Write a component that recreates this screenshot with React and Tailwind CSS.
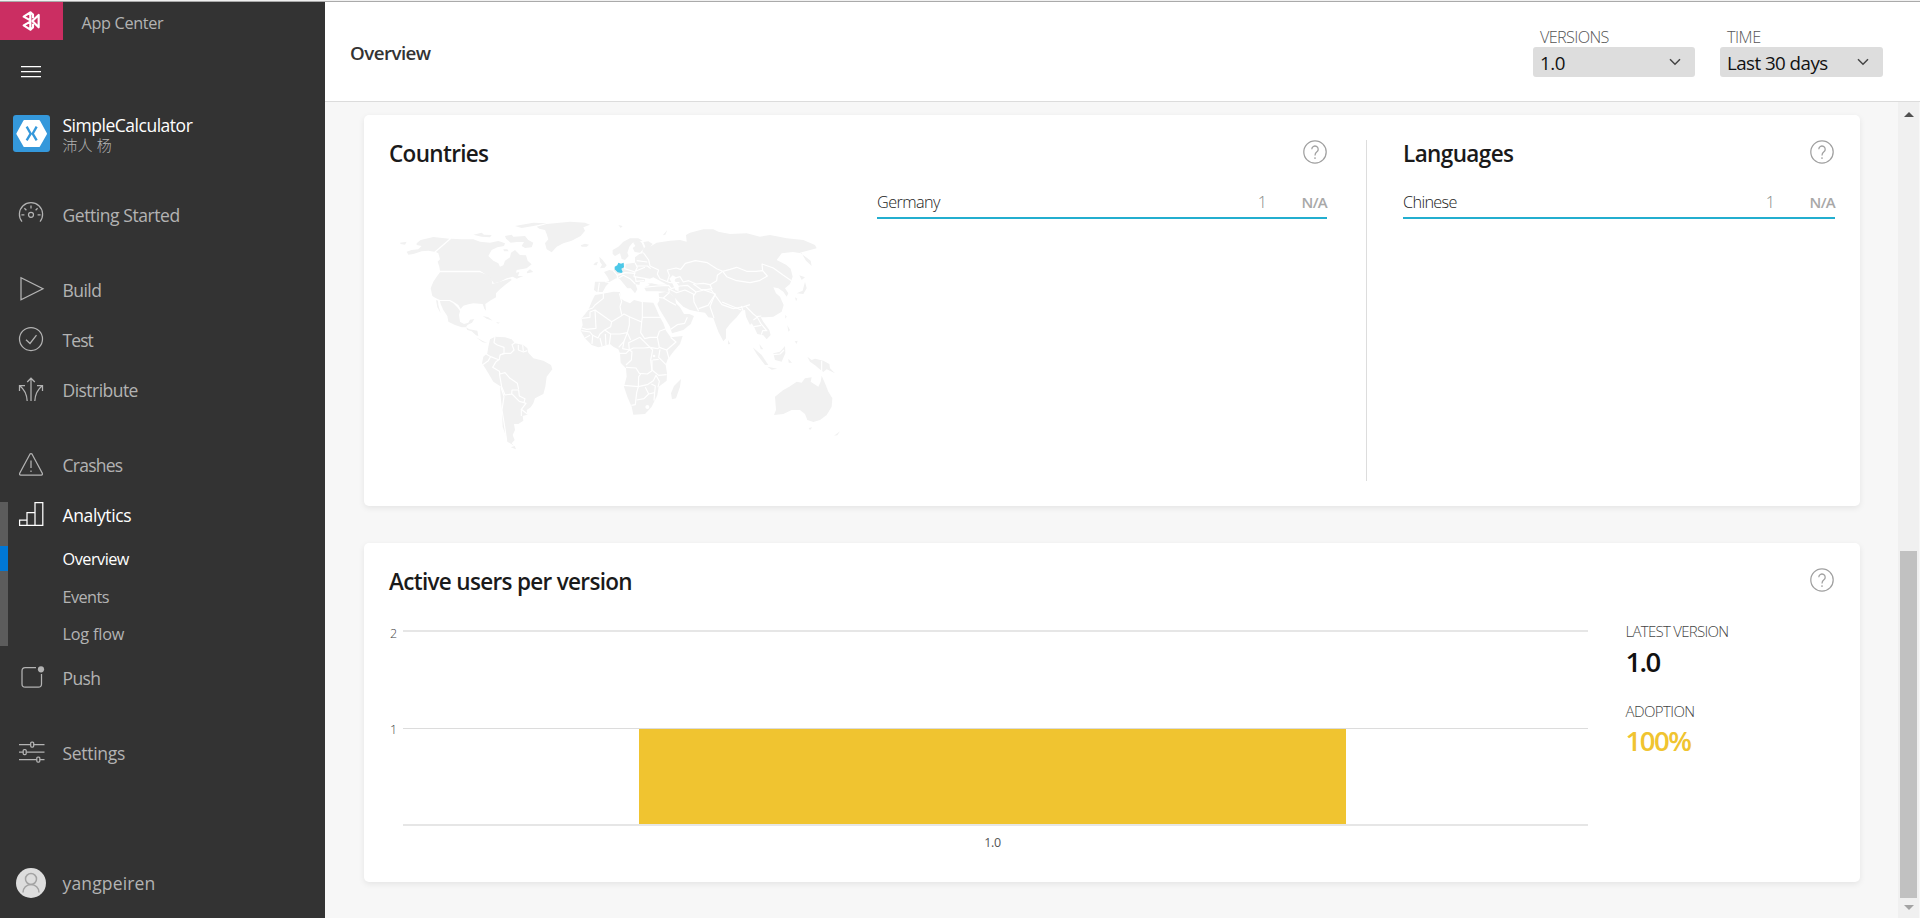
import React from "react";

function NavIcon({ children, className = "" }) {
  return (
    <svg viewBox="0 0 28 28" fill="none" stroke="currentColor" strokeWidth="1.25" className={`size-7 shrink-0 ${className}`}>
      {children}
    </svg>
  );
}

const icons = {
  gauge: (
    <>
      <path d="M5 21.6A11.6 11.6 0 1 1 23 21.6" />
      <circle cx="14" cy="14.8" r="2.5" />
      <path d="M14 5.6v3M7.4 8.2l2 2M20.6 8.2l-2 2M4.4 14.8h3M20.6 14.8h3" />
    </>
  ),
  build: <path d="M4 2.7V24.8L26 13.7Z" />,
  test: (
    <>
      <circle cx="14" cy="14" r="11.5" />
      <path d="M9 14.8l4 3.7 6.5-8.4" />
    </>
  ),
  distribute: (
    <>
      <path d="M14 26V3.2M10.2 7L14 3.2 17.8 7" />
      <path d="M10.2 26C9.8 19.5 7.5 14.5 3 11M2.5 16V10.7H8" />
      <path d="M17.8 26C18.2 19.5 20.5 14.5 25 11M25.5 16V10.7H20" />
    </>
  ),
  crashes: (
    <>
      <path d="M12.9 4.2a1.3 1.3 0 0 1 2.2 0L25.3 23.3q.5 1.7-1 1.7H3.7q-1.5 0-1-1.7Z" />
      <path d="M14 10.5v7.5M14 20.5v1.6" />
    </>
  ),
  analytics: <path d="M10 25.4H2.6V20.2H10ZM10 25.4V12.6H18V25.4ZM18 25.4V2.7H25.8V25.4Z" />,
  push: (
    <>
      <path d="M19 4.7H8.2A3.2 3.2 0 0 0 5 7.9V21a3.2 3.2 0 0 0 3.2 3.2H21.3A3.2 3.2 0 0 0 24.5 21V11" />
      <circle cx="24" cy="6.3" r="3.1" fill="currentColor" stroke="none" />
    </>
  ),
  settings: (
    <>
      <path d="M2 6.5H13.7M16.7 6.5H27.5M2 14H6.2M9.2 14H27.5M2 21.5H19.8M22.8 21.5H27.5" />
      <rect x="13.7" y="4" width="3" height="5" rx="1" />
      <rect x="6.2" y="11.5" width="3" height="5" rx="1" />
      <rect x="19.8" y="19" width="3" height="5" rx="1" />
    </>
  ),
};

function NavItem({ icon, label, className = "", labelClass = "" }) {
  return (
    <a className={`flex h-[50px] shrink-0 items-center text-[17.5px] ${className}`}>
      <NavIcon className="ml-[16.5px] -mt-0.5">{icons[icon]}</NavIcon>
      <span className={`ml-[18px] ${labelClass}`}>{label}</span>
    </a>
  );
}

function SubItem({ label, className = "" }) {
  return <a className={`flex h-[37.5px] shrink-0 items-center pt-px pl-[62.5px] text-[16.25px] ${className}`}>{label}</a>;
}

function Sidebar() {
  return (
    <aside className="flex w-[325px] shrink-0 flex-col bg-[#333333] text-[#b3b3b3]">
      <div className="flex h-[38px] shrink-0 items-center">
        <div className="flex h-full w-[63px] items-center justify-center bg-[#cb2e62] pr-px">
          <svg viewBox="66 33 54 60" className="h-5 w-[18px]" fill="none" stroke="#ffffff" strokeWidth="6.5" strokeLinejoin="round">
            <path d="M71 50L91 37V61Z" />
            <path d="M71 76L91 89V65Z" />
            <path d="M97 63L116 45V82Z" />
            <path d="M91 37L99 44V55M91 89L99 82V71" />
          </svg>
        </div>
        <span className="mt-1 ml-[18.5px] text-[16.25px] tracking-[-0.34px]">App Center</span>
      </div>

      <div className="mt-[26px] ml-[21px] flex w-5 shrink-0 flex-col gap-1 pb-[38px]">
        <span className="h-px bg-white shadow-[0_1px_0_#6a6a6a]" />
        <span className="h-px bg-white shadow-[0_1px_0_#6a6a6a]" />
        <span className="h-px bg-white shadow-[0_1px_0_#6a6a6a]" />
      </div>

      <div className="flex h-[37px] shrink-0 items-center pl-[13px]">
        <svg viewBox="39 345 111 111" className="size-[37px] shrink-0">
          <rect x="39" y="345" width="111" height="111" rx="9" fill="#3498db" />
          <path d="M73 363H117L138 401L117 438H73L52 401Z" fill="#fff" stroke="#fff" strokeWidth="6" strokeLinejoin="round" />
          <path d="M80 380L92 401L80 421M110 380L98 401L110 421" fill="none" stroke="#3498db" strokeWidth="7" />
        </svg>
        <div className="ml-[12.5px] flex flex-col">
          <span className="text-[17.5px] leading-[21px] tracking-[-0.48px] text-white">SimpleCalculator</span>
          <span className="font-['Noto_Sans_CJK_SC',sans-serif] text-[15px] leading-[17px] font-light [word-spacing:1px]">沛人 杨</span>
        </div>
      </div>

      <nav className="relative mt-[38px] flex flex-col">
        <div className="absolute top-[312px] left-0 flex h-36 w-2 flex-col bg-[#5c5c5c] pt-11">
          <span className="h-[25px] bg-[#0078d7]" />
        </div>
        <NavItem icon="gauge" label="Getting Started" className="mb-[25px]" labelClass="tracking-[-0.43px]" />
        <NavItem icon="build" label="Build" labelClass="tracking-[-0.55px]" />
        <NavItem icon="test" label="Test" labelClass="tracking-[-0.9px]" />
        <NavItem icon="distribute" label="Distribute" className="mb-[25px]" labelClass="tracking-[-0.54px]" />
        <NavItem icon="crashes" label="Crashes" labelClass="tracking-[-0.75px]" />
        <NavItem icon="analytics" label="Analytics" className="text-white" labelClass="tracking-[-0.38px]" />
        <SubItem label="Overview" className="tracking-[-0.5px] text-white" />
        <SubItem label="Events" className="tracking-[-0.55px]" />
        <SubItem label="Log flow" className="tracking-[-0.2px]" />
        <NavItem icon="push" label="Push" className="mb-[25px] pt-px" labelClass="tracking-[-0.6px]" />
        <NavItem icon="settings" label="Settings" className="pt-px" labelClass="tracking-[-0.3px]" />
      </nav>

      <div className="mt-auto mb-5 flex h-[30px] shrink-0 items-center pl-4">
        <svg viewBox="0 0 30 30" className="size-[30px]" fill="none" stroke="#a3a3a3" strokeWidth="1.5">
          <circle cx="15" cy="15" r="15" fill="#dddddd" stroke="none" />
          <circle cx="15" cy="11" r="5.5" />
          <path d="M7 24.5A8 8 0 0 1 23 24.5" />
        </svg>
        <span className="ml-[16.5px] text-[17.5px] tracking-[0.15px]">yangpeiren</span>
      </div>
    </aside>
  );
}

function Select({ label, value, width, labelClass, valueClass }) {
  return (
    <label className={`flex flex-col ${width}`}>
      <span className={`pl-[7px] text-[16.25px] leading-5 font-light text-[#555555] ${labelClass}`}>{label}</span>
      <span className="flex h-[30px] items-center justify-between rounded-[3px] bg-[#dddddd] pr-[14px] pl-[7px] text-[#111111]">
        <span className={`mt-[2px] text-[18.75px] ${valueClass}`}>{value}</span>
        <svg viewBox="0 0 12 8" className="h-2 w-3" fill="none" stroke="#444444" strokeWidth="1.5">
          <path d="M1 1.2L6 6.2L11 1.2" />
        </svg>
      </span>
    </label>
  );
}

function Help() {
  return (
    <svg viewBox="0 0 24 24" className="size-6 shrink-0" fill="none" stroke="#a0a0a0" strokeWidth="1.25">
      <circle cx="12" cy="12" r="11.2" />
      <path d="M8.8 9.2A3.2 3.2 0 1 1 13.9 11.8Q12 13.2 12 15.4M12 17.2V18.9" />
    </svg>
  );
}

function Row({ name, nameClass }) {
  return (
    <div className="flex h-[37px] items-center border-b-2 border-[#23aecf] pt-[6px] text-[16.25px]">
      <span className={`grow font-light text-[#1a1a1a] ${nameClass}`}>{name}</span>
      <span className="font-light text-[#8a8a8a]">1</span>
      <span className="w-[60px] text-right text-[15px] font-semibold tracking-[-0.7px] text-[#a8a8a8]">N/A</span>
    </div>
  );
}

const west = [
  "30,98 50,95 45,104 32,102",
  "80,100 92,90 130,81 178,86 133,125 115,122 95,124 70,132 55,134 50,125 65,120 85,118 95,108 80,105",
  "184,86 215,88 250,88 270,95 300,98 325,93 345,100 342,108 322,112 305,120 295,138 310,152 325,160 330,170 340,166 345,152 360,142 363,128 375,120 390,135 408,136 413,152 425,163 410,175 380,180 378,188 388,186 384,198 400,198 380,206 368,200 350,205 330,215 312,220 300,205 285,192 270,182 150,182 148,170 143,155 150,148 145,130 138,126",
  "250,74 275,68 282,74 305,75 300,82 275,80",
  "345,78 365,74 370,80 405,78 415,90 430,98 425,112 405,114 395,108 402,96 380,96 362,98 348,86",
  "375,48 430,38 470,40 430,48 395,54",
  "340,118 352,118 356,124 342,124",
  "410,186 420,178 430,186 412,190",
  "440,50 470,42 540,35 585,38 600,44 580,52 585,62 572,78 545,92 520,100 500,110 485,127 470,118 465,100 475,88 470,72 465,60 448,56",
  "572,106 585,101 597,104 590,110 575,110",
  "150,187 270,187 295,195 305,208 307,222 335,214 362,206 365,210 345,225 330,238 318,250 318,262 300,272 286,282 288,302 283,296 278,282 250,280 235,283 220,287 212,297 205,285 190,275 180,270 150,270 138,265 127,258 122,235 130,215 140,200",
  "150,273 178,273 190,280 203,293 210,303 207,315 210,335 222,342 235,338 240,329 253,327 246,338 232,345 228,352 215,352 195,345 175,335 172,318 160,300 152,282",
  "138,270 144,272 145,285 152,310 142,292",
  "228,352 238,358 262,362 265,378 258,376 245,364 232,360",
  "258,382 280,394 292,399 278,397",
  "278,318 295,322 308,332 290,326",
  "318,336 330,338 324,341",
  "300,388 315,380 345,382 365,388 375,400 400,405 412,415 415,428 430,445 460,452 483,465 487,478 470,500 466,530 460,552 435,565 430,580 422,592 410,600 412,614 398,618 400,632 385,642 372,642 375,660 368,675 374,690 365,700 372,707 352,695 345,670 338,650 336,600 332,560 330,528 310,515 295,490 283,470 276,460 280,440 292,430 295,410",
  "362,712 374,708 378,718",
];

const westBorders = [
  "315,380 312,398 322,405 342,412 342,430 330,435",
  "318,455 328,448 330,435 345,430 362,430 372,420 366,404 378,396",
  "385,404 385,420 400,426 412,422",
  "398,404 400,424",
  "278,464 295,452 302,440 285,430",
  "302,440 328,450",
  "318,455 308,472 328,484 330,492 345,488 360,505 382,520 386,538",
  "328,490 335,530 345,555 365,552 366,540 386,540 388,558 405,566 402,578 388,574 366,552",
  "402,578 408,580 394,598 412,612",
  "394,598 394,618",
  "332,528 342,560 336,600 344,650 350,692",
];

const east = [
  "75,255 95,252 130,245 150,246 152,265 162,272 180,280 192,270 215,276 250,278 256,290 268,318 280,340 288,362 302,382 338,378 330,402 310,425 293,448 287,465 291,490 290,512 266,530 262,556 245,590 225,612 190,614 185,590 172,560 162,530 170,500 168,475 152,458 150,430 145,418 130,410 120,402 100,408 85,412 65,405 45,385 32,362 38,345 35,325 55,300 65,275",
  "333,507 330,530 318,565 306,568 303,550 312,528",
  "266,250 285,246 300,250 315,262 318,280 330,292 342,312 358,312 372,318 362,342 340,360 306,370 300,350 285,325 270,300 262,282 268,272",
  "128,120 145,110 160,95 180,85 205,85 218,92 200,96 188,98 178,110 172,128 176,138 165,150 155,147 150,130 135,138 128,132",
  "190,98 204,90 215,98 222,115 210,128 194,126 188,114 196,108",
  "75,215 105,215 118,212 112,200 102,186 118,180 130,182 138,170 145,160 165,162 195,158 195,142 208,132 218,130 218,120 226,110 220,96 235,94 248,102 240,110 260,98 300,92 330,90 350,95 348,75 360,68 400,58 430,58 445,65 480,72 530,70 570,80 600,75 650,85 700,90 735,105 740,115 712,122 690,128 722,152 725,168 708,152 695,130 668,126 635,130 620,150 648,164 662,176 668,200 660,222 645,235 655,250 650,260 640,245 625,235 610,232 618,250 630,260 641,285 635,305 610,320 585,322 572,322 580,335 598,360 602,375 590,388 580,376 562,372 552,350 545,340 540,345 528,320 525,300 515,302 500,322 480,342 468,358 468,385 460,394 445,365 435,338 430,324 415,322 405,308 385,305 360,300 340,290 325,275 308,256 298,248 285,245 262,244 228,244 222,232 240,225 226,215 210,216 208,225 196,222 202,238 195,250 180,232 160,206 178,222 185,235 172,235 150,208 138,205 120,215 108,228 98,246 80,246 72,240",
  "88,140 98,150 110,166 104,173 90,175 96,164 90,156",
  "75,158 84,155 80,166 70,165",
  "705,215 710,235 700,252 680,250 698,242",
  "688,196 705,202 695,210",
  "675,262 682,266 678,274",
  "474,390 481,402 474,403",
  "548,412 575,435 595,465 585,465 560,432",
  "592,470 622,476 605,479",
  "610,430 630,425 645,408 646,430 635,455 615,450",
  "655,446 666,458 656,458",
  "568,402 580,418 572,418",
  "652,345 660,360 655,365",
  "674,394 683,392 680,402",
  "646,314 650,320 646,326",
  "712,440 725,450 735,446 760,452 778,462 780,475 795,490 770,478 760,486 752,480 735,466 720,455",
  "615,560 640,540 658,530 680,515 695,518 705,505 725,502 722,515 745,530 752,515 755,497 765,520 775,545 787,565 785,590 770,615 750,630 730,636 712,630 705,612 690,600 665,600 640,612 612,615 618,600",
  "716,654 727,652 720,660",
  "792,677 810,664 802,676",
  "145,45 158,48 152,54",
  "278,76 292,60 286,74",
];

const eastBorders = [
  "100,250 100,265 75,285 68,294 50,300",
  "35,325 60,322 60,306 75,300 78,355 50,358 35,354",
  "75,300 125,335 150,320 162,312 178,320 178,345 172,368 182,390",
  "125,335 122,350 104,360 90,372 84,384 68,376 60,366 34,362",
  "148,250 155,275 150,290 155,314",
  "178,320 215,336 217,322 217,276",
  "217,322 272,322",
  "215,336 212,368 224,386 240,382 262,382 268,364 288,356",
  "104,360 122,372 150,372 172,368",
  "122,372 118,404",
  "172,368 162,394 146,412",
  "106,372 108,406",
  "90,384 96,408",
  "68,376 66,402",
  "45,384 60,376",
  "162,394 158,416 178,420 176,398 210,382 240,412 222,414 190,414 178,420",
  "150,430 168,430 178,420 186,425 184,450 168,465",
  "168,472 198,474 208,490 232,492 246,482 242,450 248,420 240,412 262,416 270,412",
  "262,382 268,412 290,420 318,396 302,382",
  "290,420 297,446",
  "270,418 266,442 288,464",
  "248,450 266,448",
  "246,450 246,480 266,496 290,494",
  "162,526 205,530 206,500 212,492",
  "205,530 232,524 250,512 258,496 268,514 264,532",
  "205,530 200,548 196,584 184,586",
  "200,570 222,566 236,552 226,532",
  "236,552 254,548 256,528 244,522",
  "254,548 252,572",
  "220,232 262,228 296,226 304,236 330,228",
  "262,262 280,264 298,248",
  "280,264 300,276 318,286",
  "302,358 322,344 344,340 352,322",
  "298,248 296,236 320,248 345,240 370,252 372,276 386,304",
  "292,214 298,196 292,180 318,174 332,178 346,160 376,152 412,158 440,176 458,184",
  "220,128 236,150 240,168 266,180 262,192 270,206 300,218 328,218",
  "200,152 232,156",
  "198,168 232,168 242,176",
  "195,158 202,172 196,184 225,172",
  "165,162 164,176 195,186 192,200 228,206",
  "130,182 142,196 165,188 196,190",
  "142,196 142,206 160,196 180,206 196,222",
  "196,200 198,214 222,212",
  "105,215 120,218",
  "88,218 84,246",
  "458,184 480,178 500,172 530,184 558,184 578,182 592,198 568,212 540,218 500,212 470,200 458,184",
  "578,182 576,162 610,174 640,196 664,212",
  "458,184 442,196 440,212 420,224 400,220 378,222 356,212 340,216 330,200 310,206",
  "330,228 352,226 378,246 402,240 426,236 420,224",
  "378,246 372,256",
  "402,240 436,252 414,286 386,296",
  "370,222 392,238 424,240 440,262 456,284 490,296 522,290 540,284",
  "436,252 428,270 420,290 432,324",
  "456,276 490,290 514,300",
  "514,288 520,304",
  "528,290 550,312 560,320 574,318",
  "550,330 562,322 572,340 590,362",
  "552,350 574,346",
  "574,374 578,362 592,362",
  "755,452 755,486",
  "610,434 630,432 642,420",
];

function WorldMap() {
  return (
    <svg viewBox="0 0 1440 720" className="h-60 w-[480px]" fill="#f1f1f1">
      <g>
        {west.map((p) => <polygon key={p} points={p} />)}
        <g fill="none" stroke="#ffffff" strokeWidth="3.5" strokeLinejoin="round">
          {westBorders.map((p) => <polyline key={p} points={p} />)}
        </g>
      </g>
      <g transform="translate(540)">
        {east.map((p) => <polygon key={p} points={p} />)}
        <g fill="none" stroke="#ffffff" strokeWidth="3.5" strokeLinejoin="round">
          {eastBorders.map((p) => <polyline key={p} points={p} />)}
        </g>
        <g fill="#ffffff">
          <polygon points="222,222 226,204 240,206 250,202 272,214 292,224 265,224 245,220" />
          <polygon points="298,206 308,196 318,202 314,212 326,226 326,244 316,240 308,222" />
          <circle cx="232" cy="591" r="6" />
          <circle cx="252" cy="438" r="4" />
        </g>
        <polygon fill="#4cc8e8" points="134,170 142,166 145,158 153,161 161,158 162,172 154,176 158,186 154,189 143,187 134,178" />
      </g>
    </svg>
  );
}

function Card({ children, className }) {
  return <section className={`flex rounded-[5px] bg-white shadow-[0_2px_6px_rgba(0,0,0,0.08)] ${className}`}>{children}</section>;
}

function Title({ children, className }) {
  return <h2 className={`text-[22.5px] leading-[28px] font-semibold text-[#1a1a1a] ${className}`}>{children}</h2>;
}

function GeoCard() {
  return (
    <Card className="h-[391px] shrink-0 py-[25px]">
      <div className="flex w-[1003px] flex-col border-r border-[#dddddd] pr-[39px] pl-[25px]">
        <div className="flex justify-between">
          <Title className="tracking-[-0.67px]">Countries</Title>
          <Help />
        </div>
        <div className="flex grow justify-between">
          <div className="mt-[42px] ml-px w-[480px]">
            <WorldMap />
          </div>
          <div className="mt-[14px] w-[450px]">
            <Row name="Germany" nameClass="tracking-[-0.6px]" />
          </div>
        </div>
      </div>
      <div className="flex grow flex-col pr-[25px] pl-[36px]">
        <div className="flex justify-between pr-px">
          <Title className="tracking-[-0.6px]">Languages</Title>
          <Help />
        </div>
        <div className="mt-[14px]">
          <Row name="Chinese" nameClass="tracking-[-0.65px]" />
        </div>
      </div>
    </Card>
  );
}

function VersionsCard() {
  return (
    <Card className="h-[339px] shrink-0 flex-col px-[25px] pt-[25px]">
      <div className="flex justify-between pr-px">
        <Title className="tracking-[-0.68px]">Active users per version</Title>
        <Help />
      </div>
      <div className="mt-[30px] flex">
        <div className="flex w-[13.5px] flex-col pl-px text-[12.5px] leading-4 font-light text-[#444444]">
          <span className="h-24">2</span>
          <span>1</span>
        </div>
        <div className="mt-[4px] flex w-[1185px] flex-col">
          <div className="h-[98px] border-t-2 border-[#e6e6e6]" />
          <div className="flex h-[98px] justify-center border-t border-b-2 border-t-[#dcdcdc] border-b-[#e6e6e6]">
            <div className="ml-[-5px] w-[707px] bg-[#f0c430]" />
          </div>
          <span className="mt-2 -ml-[5px] text-center text-[12.5px] leading-[18px] tracking-[-0.3px] text-[#555555]">1.0</span>
        </div>
        <div className="-mt-[5px] ml-[38px] flex flex-col">
          <span className="text-[15px] leading-5 font-light tracking-[-0.72px] text-[#444444]">LATEST VERSION</span>
          <span className="mt-1 text-[27.5px] leading-[33px] font-semibold tracking-[-1.6px] text-[#111111]">1.0</span>
          <span className="mt-[23px] text-[15px] leading-5 font-light tracking-[-0.6px] text-[#444444]">ADOPTION</span>
          <span className="mt-[3px] text-[27.5px] leading-[33px] font-semibold tracking-[-1.5px] text-[#f0c430]">100%</span>
        </div>
      </div>
    </Card>
  );
}

function Scrollbar() {
  return (
    <div className="mr-px flex w-[21px] flex-col items-center justify-between bg-[#f0f0f0] pt-[10px] pb-2">
      <svg viewBox="0 0 10 5" className="h-[5px] w-[10px]" fill="#505050"><path d="M5 0L10 5H0Z" /></svg>
      <div className="flex flex-col items-center gap-[7px]">
        <div className="h-[347px] w-[17px] bg-[#c1c1c1]" />
        <svg viewBox="0 0 10 5" className="h-[5px] w-[10px]" fill="#a3a3a3"><path d="M0 0H10L5 5Z" /></svg>
      </div>
    </div>
  );
}

export default function App() {
  return (
    <div className="flex h-[918px] w-[1920px] flex-col overflow-hidden bg-[#f7f7f7] font-['Open_Sans','Noto_Sans_CJK_SC',sans-serif]">
      <div className="h-[2px] shrink-0 border-b border-[#aaaaaa] bg-[#f1f1f1]" />
      <div className="flex min-h-0 grow">
        <Sidebar />
        <main className="flex grow flex-col">
          <header className="flex h-[100px] shrink-0 justify-between border-b border-[#dcdcdc] bg-white pr-[37px] pl-[25px]">
            <h1 className="mt-[38px] text-[18.75px] leading-[26px] font-semibold tracking-[-0.55px] text-[#333333]">Overview</h1>
            <div className="mt-[25px] flex gap-[25px]">
              <Select label="VERSIONS" value="1.0" width="w-[162px]" labelClass="tracking-[-0.65px]" valueClass="tracking-[-0.5px]" />
              <Select label="TIME" value="Last 30 days" width="w-[163px]" labelClass="tracking-[-0.5px]" valueClass="tracking-[-0.55px]" />
            </div>
          </header>
          <div className="flex min-h-0 grow">
            <div className="flex grow flex-col gap-[37px] pt-[13px] pr-[38px] pl-[39px]">
              <GeoCard />
              <VersionsCard />
            </div>
            <Scrollbar />
          </div>
        </main>
      </div>
    </div>
  );
}
